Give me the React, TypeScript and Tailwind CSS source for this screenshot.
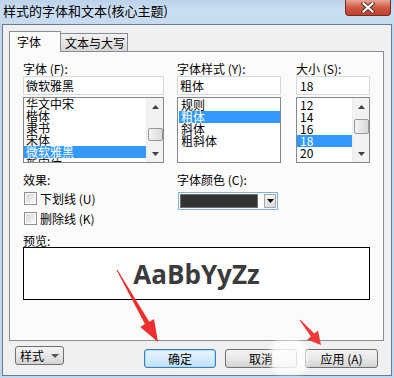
import React from "react";

function Tri({ dir, color = "#000", w = 7, h = 4 }: { dir: "up" | "down"; color?: string; w?: number; h?: number }) {
  const pts = dir === "up" ? `0,${h} ${w},${h} ${w / 2},0` : `0,0 ${w},0 ${w / 2},${h}`;
  return (
    <svg width={w} height={h} viewBox={`0 0 ${w} ${h}`} className="block">
      <polygon points={pts} fill={color} />
    </svg>
  );
}

function Scrollbar({ thumb }: { thumb: "font" | "size" }) {
  return (
    <div className="w-[17px] h-full flex flex-col bg-[#f2f2f2] border-l border-[#ececec]">
      <div className="h-[17px] flex items-center justify-center">
        <Tri dir="up" color="#404040" />
      </div>
      <div className="flex-1 flex flex-col items-center">
        <div
          className={
            thumb === "font"
              ? "mt-[13px] w-[15px] h-[13px] rounded-[2px] border border-[#979797] bg-gradient-to-r from-[#f4f4f4] to-[#dadada]"
              : "mt-[4px] w-[15px] h-[15px] rounded-[2px] border border-[#979797] bg-gradient-to-r from-[#f4f4f4] to-[#dadada]"
          }
        />
      </div>
      <div className="h-[17px] flex items-center justify-center">
        <Tri dir="down" color="#404040" />
      </div>
    </div>
  );
}

function Item({ text, sel, pad }: { text: string; sel?: boolean; pad: string }) {
  return (
    <div
      className={
        "h-[12px] leading-[12px] text-[12px] whitespace-nowrap " +
        pad +
        (sel ? " bg-[#3399ff] text-white" : " text-black")
      }
    >
      {text}
    </div>
  );
}

function Btn({ children, cls }: { children: React.ReactNode; cls: string }) {
  return (
    <div
      className={
        "h-[19px] rounded-[3px] border flex items-center justify-center text-[12px] leading-[12px] text-black " + cls
      }
    >
      {children}
    </div>
  );
}

export default function App() {
  return (
    <div className="w-[394px] h-[378px] overflow-hidden relative bg-[#c3d8ee] font-['Noto_Sans_CJK_SC',sans-serif] text-black">
      {/* title bar */}
      <div className="h-[24px] flex justify-between items-start bg-gradient-to-b from-[#bdd3ea] via-[#cadef1] to-[#c6daef]">
        <div className="pl-[3px] pt-[2px] text-[13px] leading-[17px] text-black">样式的字体和文本(核心主题)</div>
        <div className="mr-[3px] w-[46px] h-[16px] rounded-b-[4px] border border-t-0 border-[#7a2c22] bg-gradient-to-b from-[#e8a697] via-[#cf5a44] to-[#c0402a] flex items-center justify-center">
          <svg width="14" height="11" viewBox="0 0 14 11">
            <path d="M2.5 1.5 L11.5 9.5 M11.5 1.5 L2.5 9.5" stroke="#4a2a26" strokeWidth="4" strokeLinecap="square" />
            <path d="M2.5 1.5 L11.5 9.5 M11.5 1.5 L2.5 9.5" stroke="#ffffff" strokeWidth="2.2" strokeLinecap="square" />
          </svg>
        </div>
      </div>

      {/* body */}
      <div className="ml-[2px] w-[390px] h-[352px] border border-[#6b7b8d] bg-[#f0f0f0] flex flex-col">
        {/* tabs */}
        <div className="mt-[6px] ml-[6px] h-[20px] flex items-end">
          <div className="relative z-10 -mb-px w-[52px] h-[21px] border border-b-0 border-[#898c95] bg-[#fbfbfb] pl-[7px] pt-[2px] text-[12px] leading-[16px]">
            字体
          </div>
          <div className="w-[67px] h-[18px] border border-l-0 border-b-0 border-[#898c95] bg-gradient-to-b from-[#f2f2f2] to-[#d6d6d6] pl-[4px] pt-[1px] text-[12px] leading-[15px]">
            文本与大写
          </div>
        </div>

        {/* panel */}
        <div className="ml-[6px] w-[375px] h-[290px] border border-[#898c95] bg-[#fbfbfb] pt-[10px] pl-[13px] flex flex-col">
          {/* top row */}
          <div className="flex">
            <div className="w-[141px] flex flex-col">
              <div className="h-[14px] text-[12px] leading-[14px]">字体 (F):</div>
              <div className="h-[19px] border border-[#d3d8de] bg-white text-[12px] leading-[17px] pl-[2px]">微软雅黑</div>
              <div className="mt-[2px] h-[66px] border border-[#828790] bg-white flex overflow-hidden">
                <div className="flex-1 flex flex-col overflow-hidden">
                  <Item text="华文中宋" pad="pl-[2px]" />
                  <Item text="楷体" pad="pl-[2px]" />
                  <Item text="隶书" pad="pl-[2px]" />
                  <Item text="宋体" pad="pl-[2px]" />
                  <Item text="微软雅黑" sel pad="pl-[2px]" />
                  <Item text="新宋体" pad="pl-[2px]" />
                </div>
                <Scrollbar thumb="font" />
              </div>
            </div>
            <div className="ml-[13px] w-[104px] flex flex-col">
              <div className="h-[14px] text-[12px] leading-[14px]">字体样式 (Y):</div>
              <div className="h-[19px] border border-[#d3d8de] bg-white text-[12px] leading-[17px] pl-[2px]">粗体</div>
              <div className="mt-[2px] h-[66px] border border-[#828790] bg-white flex flex-col overflow-hidden pt-px pl-px">
                <Item text="规则" pad="pl-[2px]" />
                <Item text="粗体" sel pad="pl-[2px]" />
                <Item text="斜体" pad="pl-[2px]" />
                <Item text="粗斜体" pad="pl-[2px]" />
              </div>
            </div>
            <div className="ml-[15px] w-[74px] flex flex-col">
              <div className="h-[14px] text-[12px] leading-[14px]">大小 (S):</div>
              <div className="h-[19px] border border-[#d3d8de] bg-white text-[12px] leading-[17px] pl-[3px]">18</div>
              <div className="mt-[2px] h-[66px] border border-[#828790] bg-white flex overflow-hidden">
                <div className="flex-1 flex flex-col overflow-hidden pt-px">
                  <Item text="12" pad="pl-[3px]" />
                  <Item text="14" pad="pl-[3px]" />
                  <Item text="16" pad="pl-[3px]" />
                  <Item text="18" sel pad="pl-[3px]" />
                  <Item text="20" pad="pl-[3px]" />
                </div>
                <Scrollbar thumb="size" />
              </div>
            </div>
          </div>

          {/* effects row */}
          <div className="mt-[10px] flex">
            <div className="w-[141px] flex flex-col">
              <div className="h-[14px] text-[12px] leading-[14px]">效果:</div>
              <div className="mt-[5px] h-[13px] flex items-center">
                <div className="ml-px w-[13px] h-[13px] border border-[#8e8f8f] bg-white p-px">
                  <div className="w-full h-full bg-gradient-to-br from-[#d7d7d7] to-[#f8f8f8]" />
                </div>
                <span className="ml-[3px] text-[12px] leading-[13px]">下划线 (U)</span>
              </div>
              <div className="mt-[7px] h-[13px] flex items-center">
                <div className="ml-px w-[13px] h-[13px] border border-[#8e8f8f] bg-white p-px">
                  <div className="w-full h-full bg-gradient-to-br from-[#d7d7d7] to-[#f8f8f8]" />
                </div>
                <span className="ml-[3px] text-[12px] leading-[13px]">删除线 (K)</span>
              </div>
            </div>
            <div className="ml-[13px] flex flex-col">
              <div className="h-[14px] text-[12px] leading-[14px]">字体颜色 (C):</div>
              <div className="mt-[5px] ml-px w-[100px] h-[18px] border border-[#7fb2e4] bg-white flex items-center pl-px pr-px">
                <div className="w-[79px] h-[14px] border border-[#6f6f6f] bg-[#333333]" />
                <div className="ml-[6px] w-[12px] h-[14px] border border-[#a8a8a8] bg-gradient-to-b from-[#f4f4f4] to-[#dcdcdc] flex items-center justify-center">
                  <Tri dir="down" w={7} h={4} />
                </div>
              </div>
            </div>
          </div>

          {/* preview */}
          <div className="mt-[9px] h-[13px] text-[12px] leading-[13px]">预览:</div>
          <div className="w-[347px] h-[53px] border border-black bg-white flex items-center justify-center">
            <span className="font-['Open_Sans',sans-serif] font-bold text-[26px] leading-[30px] text-[#3b3b3b]">AaBbYyZz</span>
          </div>
        </div>

        {/* bottom buttons */}
        <div className="flex items-start">
          <div className="ml-[12px] mt-[5px] w-[49px] h-[19px] rounded-[3px] border border-[#707070] bg-gradient-to-b from-[#f4f4f4] via-[#e8e8e8] to-[#d2d2d2] flex items-center pl-[4px] text-[12px] leading-[12px]">
            样式
            <span className="ml-[7px]">
              <Tri dir="down" color="#555" w={8} h={4} />
            </span>
          </div>
          <div className="ml-[80px] mt-[8px] flex">
            <Btn cls="w-[72px] border-[#3c7fb1] bg-gradient-to-b from-[#e9f5fd] via-[#d5ecfb] to-[#bfe1f7] shadow-[inset_0_0_0_1px_#a8dcf5]">确定</Btn>
            <Btn cls="ml-[9px] w-[72px] border-[#707070] bg-gradient-to-b from-[#f4f4f4] via-[#e8e8e8] to-[#d2d2d2]">取消</Btn>
            <Btn cls="ml-[8px] w-[73px] border-[#707070] bg-gradient-to-b from-[#f4f4f4] via-[#e8e8e8] to-[#d2d2d2]">应用 (A)</Btn>
          </div>
        </div>
      </div>

      {/* watermark haze */}
      <div className="absolute left-[271px] top-[340px] w-[36px] h-[34px] rounded-[10px] bg-white/80 blur-[2px]" />

      {/* red annotation arrows */}
      <svg className="absolute left-0 top-0 pointer-events-none" width="394" height="378" viewBox="0 0 394 378">
        <polygon
          points="117.4,269.8 149.3,321.7 154.0,319.0 158,342 140.2,326.9 144.9,324.1 116.6,270.2"
          fill="#ef2f2f"
        />
        <polygon
          points="300.4,319.7 314.3,333.6 318.0,330.5 321,345 307.2,339.5 310.9,336.4 299.6,320.3"
          fill="#ef3a3a"
        />
      </svg>
    </div>
  );
}
